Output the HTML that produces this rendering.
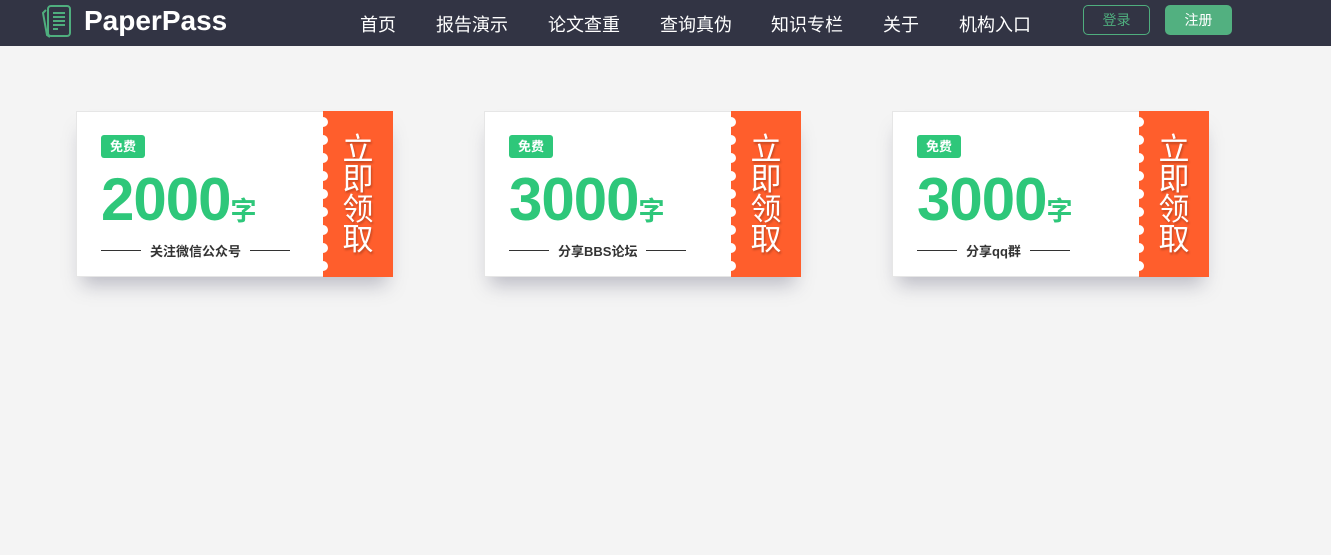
<!DOCTYPE html>
<html><head><meta charset="utf-8"><style>
*{margin:0;padding:0;box-sizing:border-box}
body{width:1331px;height:555px;background:#f4f4f4;font-family:"Liberation Sans","Noto Sans CJK SC",sans-serif;overflow:hidden;position:relative}
.nav{height:46px;background:#323444;position:relative}
.logo{position:absolute;left:84px;top:5px;color:#fff;font-size:28px;font-weight:bold}
.nav a{position:absolute;top:11px;color:#fff;font-size:18px;text-decoration:none}
.btn1{position:absolute;left:1083px;top:5px;width:67px;height:30px;border:1px solid #4fae7e;border-radius:5px;color:#4fae7e;font-size:14px;text-align:center;line-height:28px}
.btn2{position:absolute;left:1165px;top:5px;width:67px;height:30px;background:#52b080;border-radius:5px;color:#fff;font-size:14px;text-align:center;line-height:30px}
.card{position:absolute;top:111px;width:317px;height:166px;background:#fff;border:1px solid #e6e6e6;box-shadow:0 14px 18px -6px rgba(120,120,140,.45)}
.badge{position:absolute;left:24px;top:23px;width:44px;height:23px;background:#2ec77a;color:#fff;font-size:13px;font-weight:bold;text-align:center;line-height:23px;border-radius:3px}
.num{position:absolute;left:24px;top:53px;color:#2ec77a;font-size:60px;font-weight:bold;letter-spacing:-1px;line-height:70px}
.num span{font-size:26px;letter-spacing:0}
.desc{position:absolute;left:24px;top:129px;display:flex;align-items:center;gap:9px;font-size:13px;font-weight:bold;color:#333}
.desc:before,.desc:after{content:"";width:40px;border-top:1px solid #333}
.tab{position:absolute;left:246px;top:-1px;height:166px;background:#ff5e2c;color:#fff;font-size:31px;text-align:center;line-height:30px;padding-top:24px;width:70px;text-shadow:1px 2px 2px rgba(0,0,0,.25)}
.tab i{position:absolute;left:-5px;width:10px;height:10px;border-radius:50%;background:#fff}
</style></head><body>
<div class="nav">
<svg style="position:absolute;left:41px;top:3px" width="32" height="36" viewBox="0 0 32 36" fill="none" stroke="#4fae7e" stroke-width="2"><rect x="7" y="3" width="22" height="30" rx="3"/><path d="M5 7 L2 10 L6 32 L9 34"/><path d="M12 10h12M12 14h12M12 18h12M12 22h12M12 26h5"/></svg>
<div class="logo">PaperPass</div>
<a style="left:360px">首页</a><a style="left:436px">报告演示</a><a style="left:548px">论文查重</a><a style="left:660px">查询真伪</a><a style="left:771px">知识专栏</a><a style="left:883px">关于</a><a style="left:959px">机构入口</a>
<div class="btn1">登录</div><div class="btn2">注册</div>
</div>
<div class="card" style="left:76px"><div class="badge">免费</div><div class="num">2000<span>字</span></div><div class="desc">关注微信公众号</div><div class="tab">立<br>即<br>领<br>取<i style="top:6px"></i><i style="top:24px"></i><i style="top:42px"></i><i style="top:60px"></i><i style="top:78px"></i><i style="top:96px"></i><i style="top:114px"></i><i style="top:132px"></i><i style="top:150px"></i></div></div>
<div class="card" style="left:484px"><div class="badge">免费</div><div class="num">3000<span>字</span></div><div class="desc">分享BBS论坛</div><div class="tab">立<br>即<br>领<br>取<i style="top:6px"></i><i style="top:24px"></i><i style="top:42px"></i><i style="top:60px"></i><i style="top:78px"></i><i style="top:96px"></i><i style="top:114px"></i><i style="top:132px"></i><i style="top:150px"></i></div></div>
<div class="card" style="left:892px"><div class="badge">免费</div><div class="num">3000<span>字</span></div><div class="desc">分享qq群</div><div class="tab">立<br>即<br>领<br>取<i style="top:6px"></i><i style="top:24px"></i><i style="top:42px"></i><i style="top:60px"></i><i style="top:78px"></i><i style="top:96px"></i><i style="top:114px"></i><i style="top:132px"></i><i style="top:150px"></i></div></div>
</body></html>
